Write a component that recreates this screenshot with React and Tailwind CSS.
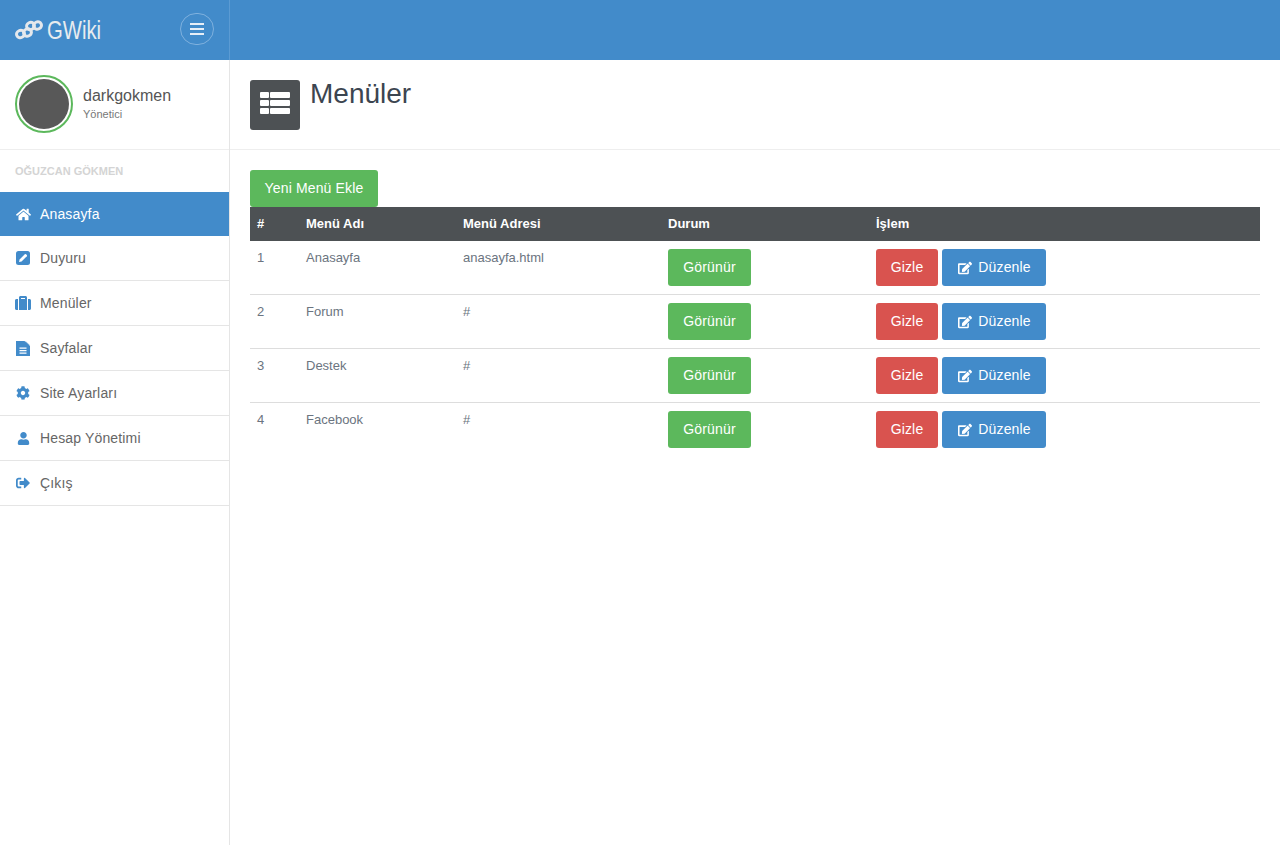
import React from "react";
import { FaHome, FaSuitcase, FaCog, FaUser, FaSignOutAlt, FaEdit } from "react-icons/fa";

function Logo() {
  return (
    <svg width="28" height="20" viewBox="0 0 28 20" fill="none" className="shrink-0">
      <g stroke="#e4e8ec" strokeWidth="3">
        <ellipse cx="5.5" cy="14" rx="4" ry="3.6" transform="rotate(-25 5.5 14)" />
        <ellipse cx="12.5" cy="12.5" rx="4" ry="3.6" transform="rotate(-25 12.5 12.5)" />
        <ellipse cx="15.5" cy="6" rx="4" ry="3.6" transform="rotate(-25 15.5 6)" />
        <ellipse cx="22.5" cy="5.5" rx="4" ry="3.6" transform="rotate(-25 22.5 5.5)" />
      </g>
    </svg>
  );
}

function PencilBox({ size = 14 }) {
  return (
    <svg width={size} height={size} viewBox="0 0 14 14">
      <rect width="14" height="14" rx="2.5" fill="currentColor" />
      <path d="M3 11l.6-2.6L8.8 3.2a.9.9 0 0 1 1.2 0l.8.8a.9.9 0 0 1 0 1.2L5.6 10.4z" fill="#fff" />
    </svg>
  );
}

function PageIcon({ size = 15 }) {
  return (
    <svg width={size - 1} height={size} viewBox="0 0 14 15">
      <path d="M0 0h8.5L14 5v10H0z" fill="currentColor" />
      <path d="M9.5 0L14 4.2H9.5z" fill="currentColor" opacity=".6" />
      <path d="M3.5 6.5h7v1.2h-7zM3.5 9h7v1.2h-7zM3.5 11.5h7v1.2h-7z" fill="#fff" />
    </svg>
  );
}

function ListIcon() {
  return (
    <svg width="30" height="22" viewBox="0 0 30 22" fill="#fff" className="mb-[4px]">
      <rect x="0" y="0" width="9" height="6" rx="1" />
      <rect x="10" y="0" width="20" height="6" rx="1" />
      <rect x="0" y="8" width="9" height="6" rx="1" />
      <rect x="10" y="8" width="20" height="6" rx="1" />
      <rect x="0" y="16" width="9" height="6" rx="1" />
      <rect x="10" y="16" width="20" height="6" rx="1" />
    </svg>
  );
}

function App() {
  const Links = [
    { id: 1, name: "Anasayfa", icon: FaHome, size: 15, active: true },
    { id: 2, name: "Duyuru", icon: PencilBox, size: 14 },
    { id: 3, name: "Menüler", icon: FaSuitcase, size: 16 },
    { id: 4, name: "Sayfalar", icon: PageIcon, size: 15 },
    { id: 5, name: "Site Ayarları", icon: FaCog, size: 14 },
    { id: 6, name: "Hesap Yönetimi", icon: FaUser, size: 13 },
    { id: 7, name: "Çıkış", icon: FaSignOutAlt, size: 14 },
  ];
  const Rows = [
    { id: 1, name: "Anasayfa", url: "anasayfa.html" },
    { id: 2, name: "Forum", url: "#" },
    { id: 3, name: "Destek", url: "#" },
    { id: 4, name: "Facebook", url: "#" },
  ];
  return (
    <div className="min-h-[845px] bg-white font-['Liberation_Sans',Arial,sans-serif] flex flex-col">
      <header className="h-[60px] bg-[#428bca] flex shrink-0">
        <div className="w-[230px] border-r border-[#5b9bd3] flex items-center justify-between pl-[15px] pr-[15px]">
          <div className="flex items-center gap-[4px]">
            <Logo />
            <span className="text-[26px] text-[#e8ecef] font-light leading-none origin-left scale-x-[0.78]">
              GWiki
            </span>
          </div>
          <button className="w-[34px] h-[32px] mt-[-2px] rounded-full border border-[#7fb1de] flex flex-col items-center justify-center gap-[3px]">
            <span className="block w-[14px] h-[2px] bg-[#e6eef7]"></span>
            <span className="block w-[14px] h-[2px] bg-[#e6eef7]"></span>
            <span className="block w-[14px] h-[2px] bg-[#e6eef7]"></span>
          </button>
        </div>
      </header>

      <div className="flex flex-1">
        <aside className="w-[230px] shrink-0 border-r border-[#e5e5e5]">
          <div className="h-[90px] border-b border-[#eeeeee] flex items-center pl-[15px] gap-[10px]">
            <div className="w-[58px] h-[58px] rounded-full border-2 border-[#5cb85c] p-[2px] mt-[-2px]">
              <div className="w-full h-full rounded-full bg-[#585858]"></div>
            </div>
            <div className="mt-[-2px]">
              <div className="text-[16px] leading-[20px] text-[#555555]">darkgokmen</div>
              <div className="text-[11px] leading-[14px] mt-[1px] text-[#777777]">Yönetici</div>
            </div>
          </div>
          <div className="h-[42px] flex items-center pl-[15px] text-[11px] font-bold text-[#d4d4d4]">
            OĞUZCAN GÖKMEN
          </div>
          <nav>
            {Links.map((item) => {
              const Icon = item.icon;
              return (
                <a
                  href="/"
                  key={item.id}
                  className={
                    item.active
                      ? "h-[44px] flex items-center pl-[15px] gap-[9px] bg-[#428bca] text-white text-[14px] tracking-[0.15px]"
                      : "h-[45px] flex items-center pl-[15px] gap-[9px] border-b border-[#e5e5e5] text-[#666666] text-[14px] tracking-[0.15px]"
                  }
                >
                  <span className={item.active ? "w-[16px] flex justify-center text-white" : "w-[16px] flex justify-center text-[#428bca]"}>
                    <Icon size={item.size} />
                  </span>
                  {item.name}
                </a>
              );
            })}
          </nav>
        </aside>

        <main className="flex-1 min-w-0">
          <div className="h-[90px] border-b border-[#eeeeee] flex pl-[20px] pt-[20px] gap-[10px]">
            <div className="w-[50px] h-[50px] rounded-[3px] bg-[#4d5154] flex items-center justify-center">
              <ListIcon />
            </div>
            <h1 className="text-[28px] leading-[28px] text-[#3c4550]">Menüler</h1>
          </div>

          <div className="pt-[20px] px-[20px]">
            <button className="block h-[37px] w-[128px] rounded-[3px] bg-[#5cb85c] text-white text-[14px] tracking-[0.15px]">
              Yeni Menü Ekle
            </button>
            <table className="w-full table-fixed text-[13px] text-[#6b7480] border-separate border-spacing-0">
              <thead>
                <tr className="h-[34px] bg-[#4d5154] text-white text-left">
                  <th className="w-[48px] pl-[7px] font-bold">#</th>
                  <th className="w-[157px] pl-[8px] font-bold">Menü Adı</th>
                  <th className="w-[205px] pl-[8px] font-bold">Menü Adresi</th>
                  <th className="w-[208px] pl-[8px] font-bold">Durum</th>
                  <th className="pl-[8px] font-bold">İşlem</th>
                </tr>
              </thead>
              <tbody>
                {Rows.map((row) => {
                  const cell = row.id === 4 ? "h-[54px] pl-[8px] align-top" : "h-[54px] pl-[8px] align-top border-b border-[#dddddd]";
                  return (
                    <tr key={row.id}>
                      <td className={cell}>
                        <div className="mt-[7px] ml-[-1px]">{row.id}</div>
                      </td>
                      <td className={cell}>
                        <div className="mt-[7px]">{row.name}</div>
                      </td>
                      <td className={cell}>
                        <div className="mt-[7px]">{row.url}</div>
                      </td>
                      <td className={cell}>
                        <button className="mt-[8px] block h-[37px] w-[83px] rounded-[3px] bg-[#5cb85c] text-white text-[14px] tracking-[0.15px]">Görünür</button>
                      </td>
                      <td className={cell}>
                        <div className="mt-[8px] flex gap-[4px]">
                          <button className="h-[37px] w-[62px] rounded-[3px] bg-[#d9534f] text-white text-[14px] tracking-[0.15px]">Gizle</button>
                          <button className="h-[37px] w-[104px] pl-[1px] rounded-[3px] bg-[#428bca] text-white text-[14px] tracking-[0.15px] flex items-center justify-center gap-[6px]">
                            <FaEdit size={14} />
                            Düzenle
                          </button>
                        </div>
                      </td>
                    </tr>
                  );
                })}
              </tbody>
            </table>
          </div>
        </main>
      </div>
    </div>
  );
}

export default App;
